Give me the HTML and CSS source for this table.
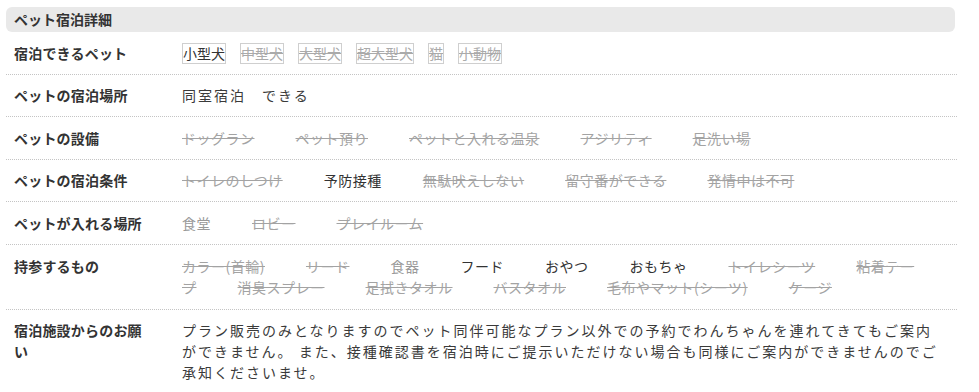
FILE: index.html
```html
<!DOCTYPE html>
<html lang="ja">
<head>
<meta charset="utf-8">
<title>ペット宿泊詳細</title>
<link rel="stylesheet" href="styles.css">
</head>
<body>
<section class="pet">
  <h2 class="pet-title">ペット宿泊詳細</h2>
  <div class="row">
    <div class="label">宿泊できるペット</div>
    <div class="value"><span class="box on">小型犬</span><span class="box off">中型犬</span><span class="box off">大型犬</span><span class="box off">超大型犬</span><span class="box off">猫</span><span class="box off">小動物</span></div>
  </div>
  <div class="row">
    <div class="label">ペットの宿泊場所</div>
    <div class="value spaced">同室宿泊　できる</div>
  </div>
  <div class="row">
    <div class="label">ペットの設備</div>
    <div class="value"><span class="item off">ドッグラン</span><span class="item off">ペット預り</span><span class="item off">ペットと入れる温泉</span><span class="item off">アジリティ</span><span class="item off">足洗い場</span></div>
  </div>
  <div class="row">
    <div class="label">ペットの宿泊条件</div>
    <div class="value"><span class="item off">トイレのしつけ</span><span class="item on">予防接種</span><span class="item off">無駄吠えしない</span><span class="item off">留守番ができる</span><span class="item off">発情中は不可</span></div>
  </div>
  <div class="row">
    <div class="label">ペットが入れる場所</div>
    <div class="value"><span class="item on gray">食堂</span><span class="item off">ロビー</span><span class="item off">プレイルーム</span></div>
  </div>
  <div class="row tall">
    <div class="label">持参するもの</div>
    <div class="value"><span class="item off">カラー(首輪)</span><span class="item off">リード</span><span class="item on gray">食器</span><span class="item on">フード</span><span class="item on">おやつ</span><span class="item on">おもちゃ</span><span class="item off">トイレシーツ</span><span class="item off">粘着テープ</span><span class="item off">消臭スプレー</span><span class="item off">足拭きタオル</span><span class="item off">バスタオル</span><span class="item off">毛布やマット(シーツ)</span><span class="item off">ケージ</span></div>
  </div>
  <div class="row last">
    <div class="label">宿泊施設からのお願い</div>
    <div class="value spaced">プラン販売のみとなりますのでペット同伴可能なプラン以外での予約でわんちゃんを連れてきてもご案内ができません。 また、接種確認書を宿泊時にご提示いただけない場合も同様にご案内ができませんのでご承知くださいませ。</div>
  </div>
</section>
</body>
</html>
```
FILE: styles.css
```css
html, body {
  margin: 0;
  padding: 0;
  background: #fff;
}
body {
  font-family: "Noto Sans CJK JP", "Noto Sans", sans-serif;
  color: #333;
  font-size: 14px;
}
.pet {
  width: 951px;
  margin: 7px 0 0 6px;
}
.pet-title {
  margin: 0;
  height: 25px;
  line-height: 25px;
  padding-left: 8px;
  background: #e9e9e9;
  border-radius: 6px;
  font-size: 14px;
  font-weight: bold;
  color: #333;
  width: 941px;
}
.row {
  display: grid;
  grid-template-columns: 136px 1fr;
  column-gap: 32px;
  padding: 10.5px 12px 10px 8px;
  border-bottom: 1px dotted #c4c4c4;
  line-height: 21px;
}
.row.tall {
  padding: 11px 12px 11px 8px;
}
.row.last {
  border-bottom: none;
  padding-top: 10px;
}
.label {
  font-weight: bold;
  color: #333;
  letter-spacing: 0.2px;
}
.value {
  color: #333;
  letter-spacing: 0.5px;
}
.value.spaced {
  letter-spacing: 2px;
  color: #3a3a3a;
}
.box {
  display: inline-block;
  border: 1px solid #cfcfcf;
  line-height: 19px;
  letter-spacing: 0;
  margin-right: 14px;
  vertical-align: top;
}
.box.on {
  color: #333;
}
.box.off {
  color: #aaa;
  text-decoration: line-through;
}
.item {
  margin-right: 41px;
}
.item.on {
  color: #333;
}
.item.on.gray {
  color: #999;
}
.item.off {
  color: #a3a3a3;
  text-decoration: line-through;
}
```
